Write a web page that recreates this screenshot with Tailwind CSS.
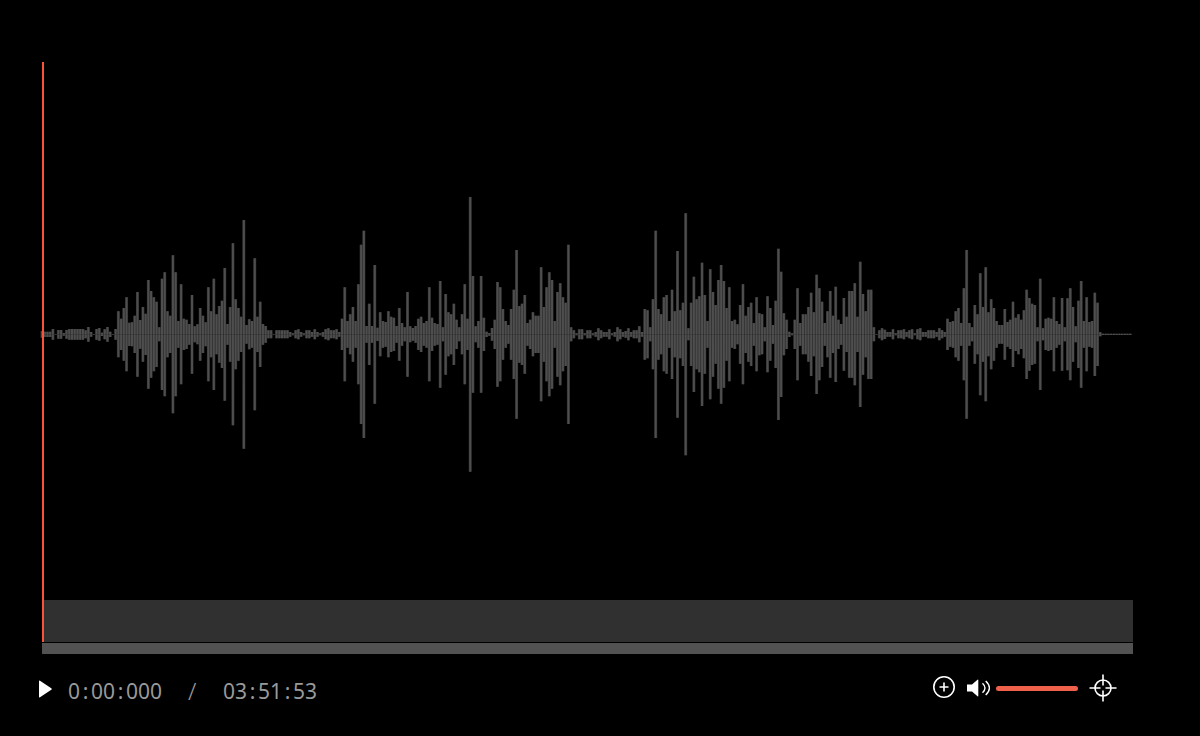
<!DOCTYPE html>
<html lang="en">
<head>
    <meta charset="UTF-8">
    <meta name="viewport" content="width=device-width, initial-scale=1.0">
    <title>Audio Player</title>
    <script src="https://cdn.jsdelivr.net/npm/@tailwindcss/browser@4"></script>
</head>
<body class="min-h-screen bg-black text-[#999999] font-['Noto_Sans',sans-serif]">
    <main class="pt-[62px] pl-[42px] pr-[67px]">
        <div class="relative">
            <svg class="block w-full h-[538px]" viewBox="0 0 1091 538" preserveAspectRatio="none" overflow="visible" role="img" aria-label="Waveform">
                <path id="halo" fill="none" stroke="#2c2c2c" stroke-width="3"/>
                <path id="wave" fill="none" stroke="#4e4e4e" stroke-width="2"/>
                <path d="M0 272.5H1057" stroke="#000" stroke-opacity=".15"/>
            </svg>
            <div class="h-[42px] bg-[#303030]"></div>
            <div id="cursor" class="absolute inset-y-0 left-0 w-[2px] bg-[#f9533c]"></div>
        </div>
        <div class="mt-px h-[11px] bg-[#525252]"></div>
    </main>

    <div class="flex items-center justify-between pt-[14px] pl-[38px] pr-[83px] h-[54px]">
        <div class="flex items-center pt-[2px]">
            <button id="play" aria-label="Play" class="w-[30px] text-white">
                <svg class="block" width="14" height="18" viewBox="0 0 14 18" fill="currentColor"><path d="M1 1.2Q1 0 2 .7L13.3 8.2Q14.3 9 13.3 9.8L2 17.3Q1 18 1 16.8Z"/></svg>
            </button>
            <div class="flex pt-[3px] text-[21px] leading-6">
                <span id="current" class="w-[120px]">0<span class="inline-block w-[11px] text-center">:</span>00<span class="inline-block w-[11px] text-center">:</span>000</span>
                <span class="w-[35px] text-2xl leading-6 font-light">/</span>
                <span id="total">03<span class="inline-block w-[11px] text-center">:</span>51<span class="inline-block w-[11px] text-center">:</span>53</span>
            </div>
        </div>
        <div class="flex items-center text-white">
            <button id="zoom" aria-label="Zoom in" class="pb-[2px]">
                <svg class="block" width="24" height="24" viewBox="0 0 24 24" fill="none" stroke="currentColor" stroke-width="1.6"><circle cx="12" cy="12" r="10.2"/><path d="M7.5 12h9M12 7.5v9"/></svg>
            </button>
            <button id="mute" aria-label="Mute" class="ml-[11px]">
                <svg class="block" width="24" height="18" viewBox="0 0 24 18"><path fill="currentColor" d="M0 5.5h5L10.5 .8q.8-.6.8.4v15.6q0 1-.8.4L5 12.5H0z"/><path fill="none" stroke="currentColor" stroke-width="1.4" d="M15.5 4.2q5 4.8 0 9.6M18.7 2q7.4 7 0 14"/></svg>
            </button>
            <input id="volume" type="range" min="0" max="100" value="100" aria-label="Volume" class="ml-[5px] w-[82px] h-[5px] appearance-none rounded-sm bg-[#f0614c] [&::-webkit-slider-thumb]:appearance-none [&::-webkit-slider-thumb]:w-0">
            <button id="center" aria-label="Center on playhead" class="ml-[11px]">
                <svg class="block" width="28" height="28" viewBox="0 0 28 28" fill="none" stroke="currentColor" stroke-width="1.6"><circle cx="14" cy="14" r="8"/><path d="M.5 14h11M16.5 14h11M14 .5v11M14 16.5v11"/></svg>
            </button>
        </div>
    </div>

    <script>
        // half height of every bar, in thirds of a pixel
        const peaks = [
            10,8,8,8,16,1,13,13,4,13,16,16,16,16,16,16,12,22,7,1,
            16,19,5,15,22,8,1,16,69,47,79,111,35,36,56,127,43,82,62,163,
            130,111,98,21,167,186,69,56,237,186,40,150,47,44,31,118,24,30,79,56,
            36,141,69,167,60,85,101,199,31,82,273,105,79,53,343,28,45,40,228,53,
            98,31,25,12,12,1,12,12,12,12,12,7,3,12,15,7,3,12,12,7,
            15,7,3,7,15,18,12,12,15,7,47,141,40,60,82,40,150,269,311,25,
            92,25,208,20,66,40,37,69,53,50,25,79,34,21,127,24,19,25,47,53,
            34,40,141,50,34,31,160,21,121,66,60,92,44,21,60,150,47,412,175,24,
            40,175,50,8,4,19,44,157,141,76,40,28,76,134,253,85,92,118,34,44,
            66,56,56,201,82,141,186,163,40,127,153,111,95,269,21,12,3,15,15,3,
            12,12,3,7,18,12,7,7,15,3,7,21,15,7,10,18,7,12,12,24,
            7,76,72,21,105,311,76,60,111,118,40,134,69,250,72,95,363,18,95,173,
            105,114,215,118,40,195,127,88,163,208,160,79,141,40,44,30,88,150,56,82,
            95,34,111,63,60,21,114,79,28,101,257,188,63,44,8,3,44,138,34,60,
            60,82,125,66,179,138,98,34,69,130,56,143,44,31,109,53,130,130,153,53,
            218,121,69,134,134,21,1,12,18,14,7,7,15,3,12,12,15,7,12,15,
            3,15,18,7,7,12,12,12,7,18,12,7,47,37,40,69,79,34,138,253,
            34,21,88,60,183,82,201,66,105,79,40,28,28,76,37,44,98,50,60,44,
            72,134,109,92,88,21,167,18,47,50,47,111,40,31,109,21,108,138,82,24,
            101,160,40,111,37,40,125,95,6,2,2,2,2,2,2,2,2,2,2,2
        ];
        const step = 1091 / peaks.length;
        const bars = peaks.map((peak, i) => `M${i * step} ${272.3 - peak / 3}v${peak * 2 / 3}`).join('');
        document.getElementById('halo').setAttribute('d', bars);
        document.getElementById('wave').setAttribute('d', bars);

        const volume = document.getElementById('volume');
        let lastVolume = volume.value;
        document.getElementById('mute').addEventListener('click', () => {
            if (volume.value > 0) {
                lastVolume = volume.value;
                volume.value = 0;
            } else {
                volume.value = lastVolume;
            }
        });
    </script>
</body>
</html>
